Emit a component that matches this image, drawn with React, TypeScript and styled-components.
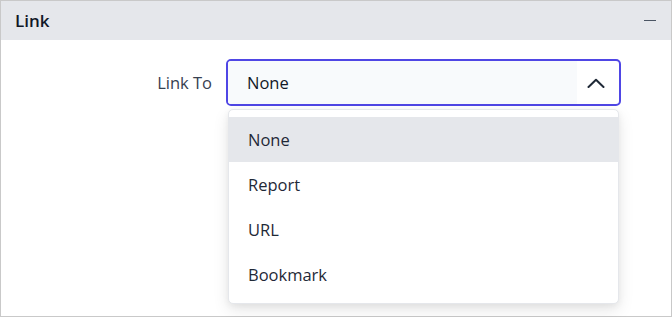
import React from 'react';
import styled, { createGlobalStyle } from 'styled-components';

const GlobalStyle = createGlobalStyle`
  html, body {
    margin: 0;
    padding: 0;
    background: #fff;
  }
  body {
    font-family: "Open Sans", "Noto Sans", Arial, sans-serif;
    color: #1f2937;
  }
  * { box-sizing: border-box; }
`;

const Panel = styled.div`
  width: 672px;
  height: 317px;
  border: 1px solid #c9c9c9;
  background: #fff;
  display: flex;
  flex-direction: column;
`;

const Header = styled.div`
  height: 39px;
  flex: none;
  background: #e5e7eb;
  padding: 0 14px 0 14px;
  display: flex;
  align-items: center;
  justify-content: space-between;
`;

const Title = styled.span`
  font-size: 17px;
  font-weight: 600;
  color: #111827;
`;

const CollapseButton = styled.button`
  width: 14px;
  height: 14px;
  border: none;
  padding: 0;
  background: transparent;
  display: flex;
  align-items: center;
  justify-content: center;
  cursor: pointer;

  &::before {
    content: '';
    display: block;
    width: 12px;
    height: 1.5px;
    background: #4b5563;
  }
`;

const Body = styled.div`
  padding: 19px 0 0 0;
`;

const FieldRow = styled.div`
  display: grid;
  grid-template-columns: 211px 395px;
  column-gap: 14px;
  align-items: center;
`;

const Label = styled.label`
  text-align: right;
  font-size: 16.5px;
  color: #374151;
`;

const SelectBox = styled.div`
  position: relative;
  height: 47px;
  border: 2px solid #4f46e5;
  border-radius: 5px;
  display: flex;
  align-items: stretch;
`;

const SelectValue = styled.div`
  flex: 1;
  background: #f8fafc;
  border-radius: 3px 0 0 3px;
  padding-left: 19px;
  display: flex;
  align-items: center;
  font-size: 16.5px;
  color: #111827;
`;

const Toggle = styled.div`
  width: 42px;
  display: flex;
  align-items: center;
  justify-content: center;
  padding-right: 4px;
  color: #1f2937;
`;

const Menu = styled.ul`
  position: absolute;
  top: calc(100% + 5px);
  left: 0;
  right: 0;
  margin: 0;
  padding: 7px 0 6px;
  list-style: none;
  background: #fff;
  border: 1px solid #e5e7eb;
  border-radius: 5px;
  box-shadow: 0 6px 16px rgba(0, 0, 0, 0.1), 0 2px 6px rgba(0, 0, 0, 0.05);
`;

const Option = styled.li<{ $active?: boolean }>`
  height: 45px;
  padding-left: 19px;
  display: flex;
  align-items: center;
  font-size: 16.5px;
  color: #1f2937;
  background: ${props => (props.$active ? '#e5e7eb' : 'transparent')};
`;

const ChevronUp = () => (
  <svg width="18" height="10" viewBox="0 0 18 10" fill="none">
    <polyline points="1.5,9 9,1.8 16.5,9" stroke="currentColor" strokeWidth="2" strokeLinecap="round" strokeLinejoin="round" />
  </svg>
);

const options = ['None', 'Report', 'URL', 'Bookmark'];

export default function App() {
  const selected = 'None';

  return (
    <>
      <GlobalStyle />
      <Panel>
        <Header>
          <Title>Link</Title>
          <CollapseButton aria-label="Collapse" />
        </Header>
        <Body>
          <FieldRow>
            <Label>Link To</Label>
            <SelectBox>
              <SelectValue>{selected}</SelectValue>
              <Toggle>
                <ChevronUp />
              </Toggle>
              <Menu>
                {options.map(option => (
                  <Option key={option} $active={option === selected}>
                    {option}
                  </Option>
                ))}
              </Menu>
            </SelectBox>
          </FieldRow>
        </Body>
      </Panel>
    </>
  );
}
